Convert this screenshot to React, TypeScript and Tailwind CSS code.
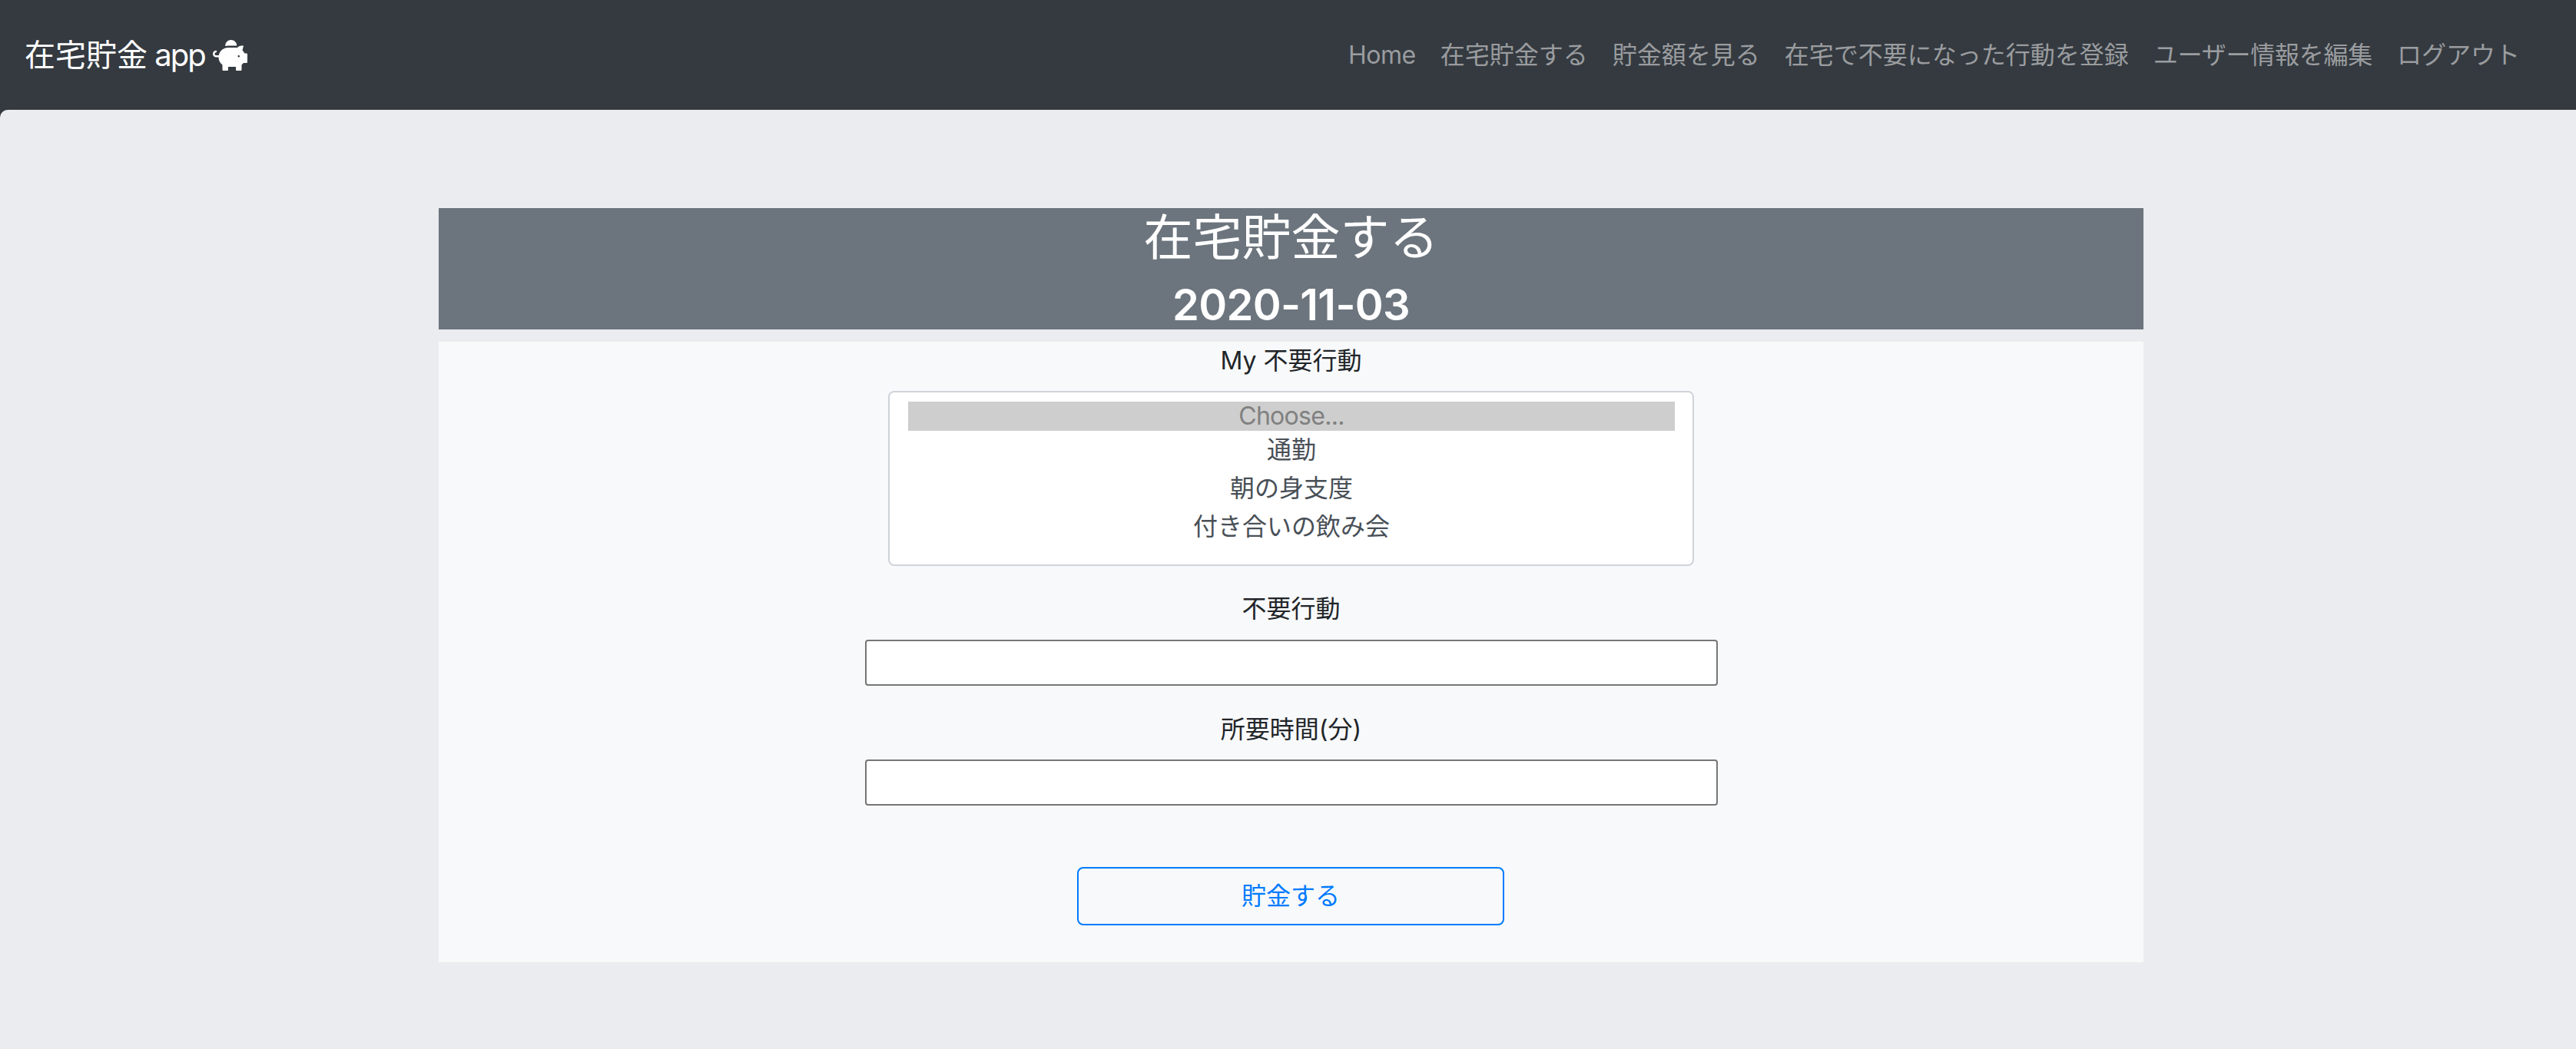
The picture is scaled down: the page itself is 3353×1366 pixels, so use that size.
import React from "react";
import { FaPiggyBank } from "react-icons/fa";

const links = [
  { label: "在宅貯金する", cls: "px-[16px] text-[#9a9c9f]" },
  { label: "貯金額を見る", cls: "px-[16px] text-[#9a9c9f]" },
  { label: "在宅で不要になった行動を登録", cls: "px-[16px] text-[#9a9c9f]" },
  { label: "ユーザー情報を編集", cls: "px-[16px] tracking-[-0.25px] text-[#9a9c9f]" },
  { label: "ログアウト", cls: "px-[16px] text-[#9a9c9f]" },
];

export default function App() {
  return (
    <div className="min-h-[1366px] bg-[#343a40] font-['Inter','Noto_Sans_CJK_JP',sans-serif] text-[32px] text-[#212529]">
      <nav className="flex h-[143px] items-center justify-between pl-[32px] pr-[57px]">
        <a className="flex items-center text-[40px] leading-[60px] text-white">
          <span>在宅貯金<span className="tracking-[-0.05em]"> app</span></span>
          <FaPiggyBank className="ml-[10px] h-[40px] w-[45px]" />
        </a>
        <ul className="flex">
          <li className="px-[16px] tracking-[-0.015em] text-[#9a9c9f]">Home</li>
          {links.map((l) => (
            <li key={l.label} className={l.cls}>{l.label}</li>
          ))}
        </ul>
      </nav>
      <main className="h-[1223px] rounded-tl-[10px] bg-[#eaecef] pl-[571px] pt-[128px]">
        <div className="w-[2219px]">
          <header className="h-[158px] bg-[#6c757d] text-center text-white">
            <h1 className="text-[64px] leading-[76px]">在宅貯金する</h1>
            <h3 className="mt-[19px] text-[56px] font-semibold leading-[63px] tracking-[-0.012em]">2020-11-03</h3>
          </header>
          <form className="mt-[16px] flex flex-col items-center bg-[#f8f9fa] pb-[48px] text-center">
            <label className="leading-[50px]">My 不要行動</label>
            <div className="mt-[14px] h-[228px] w-[1049px] rounded-[8px] border-2 border-[#ced4da] bg-white py-[12px] pl-[24px] pr-[23px] text-[#495057]">
              <div className="h-[38px] bg-[#cecece] leading-[38px] tracking-[-0.022em] text-[#808080]">Choose...</div>
              <div className="h-[50px] leading-[49px]">通勤</div>
              <div className="h-[50px] leading-[49px]">朝の身支度</div>
              <div className="h-[50px] leading-[49px]">付き合いの飲み会</div>
            </div>
            <label className="mt-[32px] leading-[48px]">不要行動</label>
            <input type="text" aria-label="不要行動" className="mt-[16px] h-[60px] w-[1110px] rounded-[4px] border-2 border-[#767676] bg-white" />
            <label className="mt-[33px] leading-[48px]">所要時間(分)</label>
            <input type="text" aria-label="所要時間(分)" className="mt-[15px] h-[60px] w-[1110px] rounded-[4px] border-2 border-[#767676] bg-white" />
            <button type="button" className="mr-[1px] mt-[80px] h-[76px] w-[556px] rounded-[8px] border-2 border-[#007bff] text-[#007bff]">貯金する</button>
          </form>
        </div>
      </main>
    </div>
  );
}
